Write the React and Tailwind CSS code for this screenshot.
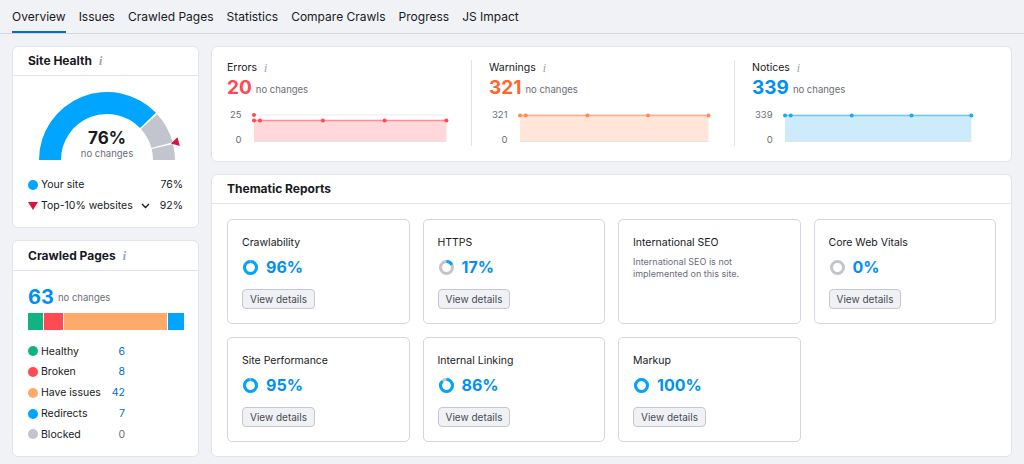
import React from "react";

const rad = (d) => (d * Math.PI) / 180;
const P = (cx, cy, r, d) => [cx + r * Math.cos(rad(d)), cy - r * Math.sin(rad(d))];

function arc(cx, cy, R, r, a1, a2) {
  const o1 = P(cx, cy, R, a1);
  const o2 = P(cx, cy, R, a2);
  const i2 = P(cx, cy, r, a2);
  const i1 = P(cx, cy, r, a1);
  return `M${o1[0]},${o1[1]} A${R},${R} 0 0 1 ${o2[0]},${o2[1]} L${i2[0]},${i2[1]} A${r},${r} 0 0 0 ${i1[0]},${i1[1]} Z`;
}

function Gauge() {
  const cx = 70, cy = 70, R = 68, r = 46;
  const t = 180 - 0.92 * 180;
  const tip = P(cx, cy, R - 2, t);
  const bc = P(cx, cy, R + 6, t);
  const s = Math.sin(rad(t)), c = Math.cos(rad(t));
  const b1 = [bc[0] + 4.5 * s, bc[1] + 4.5 * c];
  const b2 = [bc[0] - 4.5 * s, bc[1] - 4.5 * c];
  return (
    <svg width="150" height="72" viewBox="0 0 150 72">
      <path d={arc(cx, cy, R, r, 180, 180 - 0.76 * 180 + 0.8)} fill="#00a5ff" />
      <path d={arc(cx, cy, R, r, 180 - 0.76 * 180 - 0.8, t + 0.7)} fill="#c2c5cd" />
      <path d={arc(cx, cy, R, r, t - 0.7, 0)} fill="#c2c5cd" />
      <polygon points={`${tip[0]},${tip[1]} ${b1[0]},${b1[1]} ${b2[0]},${b2[1]}`} fill="#e0123d" />
    </svg>
  );
}

function Info() {
  return (
    <span className="ml-[7px] text-[12px] italic text-[#9ea1ab]" style={{ fontFamily: '"Liberation Serif", serif' }}>
      i
    </span>
  );
}

function Ring({ pct }) {
  const r = 6;
  const C = 2 * Math.PI * r;
  const blue = (pct / 100) * C;
  return (
    <svg width="17" height="17" viewBox="0 0 17 17">
      <circle cx="8.5" cy="8.5" r={r} fill="none" stroke="#c2c5cd" strokeWidth="3" />
      {pct > 0 && (
        <circle
          cx="8.5"
          cy="8.5"
          r={r}
          fill="none"
          stroke="#00a5ff"
          strokeWidth="3"
          strokeDasharray={`${blue} ${C}`}
          transform="rotate(-90 8.5 8.5)"
        />
      )}
    </svg>
  );
}

function Chart({ labels, line, fill, lineColor, dot, extraTop }) {
  const xs = ["0%", "3.1%", "35.8%", "67.9%", "100%"];
  return (
    <div className="mt-[9px] flex h-[37px] w-[219px] pl-[3px]">
      <div className="flex flex-col justify-between text-right text-[9.5px] leading-[12px] text-[#6c6e79]">
        <span>{labels[0]}</span>
        <span>{labels[1]}</span>
      </div>
      <svg className="ml-[12px] min-w-0 flex-1 overflow-visible" height="37">
        <line x1="0" x2="100%" y1="6" y2="6" stroke="#ececf0" strokeWidth="1" />
        <rect x="0" y={line} width="100%" height={32 - line} fill={fill} />
        <line x1="0" x2="100%" y1="32.5" y2="32.5" stroke="#e3e4ea" strokeWidth="1" />
        <line x1="0" x2="100%" y1={line} y2={line} stroke={lineColor} strokeWidth="1.5" />
        {extraTop && <circle cx="0" cy="6" r="2" fill={dot} />}
        {xs.map((x, i) => (
          <circle key={i} cx={x} cy={line} r="2" fill={dot} />
        ))}
      </svg>
    </div>
  );
}

function Metric({ label, value, color, labels, line, fill, lineColor, dot, extraTop, className }) {
  return (
    <div className={className}>
      <div className="flex h-[16px] items-center text-[10.5px] text-[#171a22]">
        {label}
        <Info />
      </div>
      <div className="flex h-[24px] items-end">
        <span className={`text-[19px] font-bold leading-[24px] ${color}`}>{value}</span>
        <span className="ml-[4px] pb-[4px] text-[9.5px] leading-[12px] text-[#6c6e79]">no changes</span>
      </div>
      <Chart labels={labels} line={line} fill={fill} lineColor={lineColor} dot={dot} extraTop={extraTop} />
    </div>
  );
}

function Report({ title, pct, desc }) {
  return (
    <div className="h-[105px] rounded-[5px] border border-[#d5d7df] bg-white px-[14px] pt-[15px]">
      <div className="text-[10.5px] leading-[15px] text-[#171a22]">{title}</div>
      {desc ? (
        <div className="mt-[6px] text-[9px] leading-[12px] text-[#6c6e79]">{desc}</div>
      ) : (
        <>
          <div className="mt-[6px] flex h-[22px] items-center">
            <Ring pct={pct} />
            <span className="ml-[7px] text-[16px] font-bold leading-[22px] text-[#008ff8]">{pct}%</span>
          </div>
          <button className="mt-[11px] h-[20px] whitespace-nowrap rounded-[4px] border border-[#c4c7cf] bg-[#f0f1f5] px-[7px] text-[10px] leading-[18px] text-[#484a54]">
            View details
          </button>
        </>
      )}
    </div>
  );
}

function Dot({ color }) {
  return <span className={`inline-block h-[10px] w-[10px] shrink-0 rounded-full ${color}`} />;
}

export default function App() {
  const tabs = ["Overview", "Issues", "Crawled Pages", "Statistics", "Compare Crawls", "Progress", "JS Impact"];
  const legend = [
    ["Healthy", "6", "bg-[#12b383]", "text-[#006dca]"],
    ["Broken", "8", "bg-[#ff4953]", "text-[#006dca]"],
    ["Have issues", "42", "bg-[#ffaa6b]", "text-[#006dca]"],
    ["Redirects", "7", "bg-[#00a5ff]", "text-[#006dca]"],
    ["Blocked", "0", "bg-[#c2c5cd]", "text-[#6c6e79]"],
  ];
  return (
    <div
      className="h-[464px] w-[1024px] overflow-hidden bg-[#f1f2f6] text-[#171a22]"
      style={{ fontFamily: "Inter, 'Noto Sans', sans-serif" }}
    >
      <div className="flex h-[34px] gap-[13px] border-b border-[#d5d7de] px-[12px]">
        {tabs.map((t, i) => (
          <div
            key={t}
            className={`flex items-center whitespace-nowrap pt-[3px] text-[12px] text-[#171a22] ${
              i === 0 ? "border-b-2 border-[#006dca]" : "border-b-2 border-transparent"
            }`}
          >
            {t}
          </div>
        ))}
      </div>

      <div className="flex gap-[12px] px-[12px] pt-[12px]">
        <div className="flex w-[187px] flex-col gap-[12px]">
          <div className="h-[182px] rounded-[6px] border border-[#e3e4ea] bg-white">
            <div className="flex h-[29px] items-center border-b border-[#e3e4ea] px-[15px] text-[12px] font-bold">
              Site Health
              <Info />
            </div>
            <div className="relative ml-[24px] mt-[14px] h-[72px] w-[150px]">
              <Gauge />
              <div className="absolute left-0 top-[38px] flex w-[140px] flex-col items-center">
                <span className="text-[17px] font-bold leading-[20px] text-[#171a22]">76%</span>
                <span className="text-[9.5px] leading-[12px] text-[#6c6e79]">no changes</span>
              </div>
            </div>
            <div className="mt-[12px] px-[15px] text-[10.5px]">
              <div className="flex h-[21px] items-center justify-between whitespace-nowrap">
                <span className="flex items-center gap-[3px]">
                  <Dot color="bg-[#00a5ff]" />
                  Your site
                </span>
                <span>76%</span>
              </div>
              <div className="flex h-[21px] items-center justify-between whitespace-nowrap">
                <span className="flex items-center gap-[3px]">
                  <svg width="10" height="8" viewBox="0 0 10 8">
                    <polygon points="0,0 10,0 5,8" fill="#e0123d" />
                  </svg>
                  Top-10% websites
                  <svg className="ml-[5px]" width="9" height="6" viewBox="0 0 9 6">
                    <polyline points="1,1 4.5,4.5 8,1" fill="none" stroke="#171a22" strokeWidth="1.4" />
                  </svg>
                </span>
                <span>92%</span>
              </div>
            </div>
          </div>

          <div className="h-[217px] rounded-[6px] border border-[#e3e4ea] bg-white">
            <div className="flex h-[30px] items-center border-b border-[#e3e4ea] px-[15px] text-[12px] font-bold">
              Crawled Pages
              <Info />
            </div>
            <div className="px-[15px]">
              <div className="mt-[11px] flex h-[28px] items-end">
                <span className="text-[20px] font-bold leading-[26px] text-[#008ff8]">63</span>
                <span className="ml-[4px] pb-[6px] text-[9.5px] leading-[12px] text-[#6c6e79]">no changes</span>
              </div>
              <div className="mt-[3px] flex h-[17px] w-[156px] gap-[1px]">
                <div className="w-[15px] bg-[#12b383]" />
                <div className="w-[19px] bg-[#ff4953]" />
                <div className="w-[103px] bg-[#ffaa6b]" />
                <div className="flex-1 bg-[#00a5ff]" />
              </div>
              <div className="mt-[11px]">
                {legend.map(([n, v, c, tc]) => (
                  <div key={n} className="flex h-[20.75px] w-[97px] items-center justify-between whitespace-nowrap text-[10.5px]">
                    <span className="flex items-center gap-[3px]">
                      <Dot color={c} />
                      {n}
                    </span>
                    <span className={tc}>{v}</span>
                  </div>
                ))}
              </div>
            </div>
          </div>
        </div>

        <div className="flex w-[802px] flex-col gap-[12px]">
          <div className="flex h-[116px] rounded-[6px] border border-[#e3e4ea] bg-white px-[15px] pt-[13px]">
            <Metric
              className="h-[86px] w-[245px] border-r border-[#e3e4ea]"
              label="Errors"
              value="20"
              color="text-[#ff4953]"
              labels={["25", "0"]}
              line={11.5}
              fill="#ffd8dc"
              lineColor="#ff8d96"
              dot="#ff4953"
              extraTop
            />
            <Metric
              className="h-[86px] w-[263px] border-r border-[#e3e4ea] pl-[17px]"
              label="Warnings"
              value="321"
              color="text-[#ff642d]"
              labels={["321", "0"]}
              line={6.5}
              fill="#ffe6d9"
              lineColor="#ffab86"
              dot="#ff8c4f"
            />
            <Metric
              className="h-[86px] flex-1 pl-[17px]"
              label="Notices"
              value="339"
              color="text-[#008ff8]"
              labels={["339", "0"]}
              line={6.5}
              fill="#cdebfb"
              lineColor="#6cc8f6"
              dot="#1aa9f5"
            />
          </div>

          <div className="h-[283px] rounded-[6px] border border-[#e3e4ea] bg-white">
            <div className="flex h-[29px] items-center border-b border-[#e3e4ea] px-[15px] text-[12px] font-bold">
              Thematic Reports
            </div>
            <div className="grid grid-cols-4 gap-[13px] px-[15px] pt-[15px]">
              <Report title="Crawlability" pct={96} />
              <Report title="HTTPS" pct={17} />
              <Report title="International SEO" desc="International SEO is not implemented on this site." />
              <Report title="Core Web Vitals" pct={0} />
              <Report title="Site Performance" pct={95} />
              <Report title="Internal Linking" pct={86} />
              <Report title="Markup" pct={100} />
            </div>
          </div>
        </div>
      </div>
    </div>
  );
}
